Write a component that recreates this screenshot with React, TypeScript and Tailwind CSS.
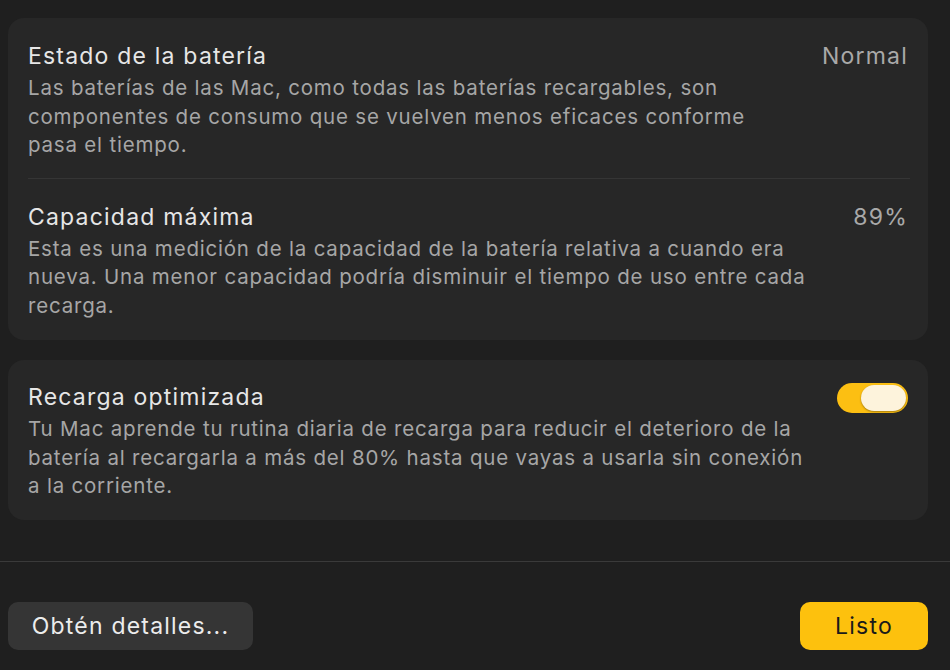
import React, { useState } from "react";

type RowProps = {
  title: string;
  description: string;
  value?: string;
  right?: React.ReactNode;
};

function Row({ title, description, value, right }: RowProps) {
  return (
    <div className="flex items-start justify-between gap-6">
      <div className="flex max-w-[785px] flex-col">
        <div className="text-[23px] leading-[28px] tracking-[1.2px] text-[#e6e6e6]">{title}</div>
        <p className="mt-[4px] text-[20.5px] leading-[28.5px] tracking-[0.8px] text-[#a6a6a6]">
          {description}
        </p>
      </div>
      {value && (
        <div className="text-[23px] leading-[28px] tracking-[1.2px] text-[#a9a9a9]">{value}</div>
      )}
      {right}
    </div>
  );
}

function Toggle({ on, onChange }: { on: boolean; onChange: (v: boolean) => void }) {
  return (
    <button
      onClick={() => onChange(!on)}
      className={
        on
          ? "flex h-[30px] w-[72px] items-center justify-end rounded-full bg-[#fcbf12] px-[2px]"
          : "flex h-[30px] w-[72px] items-center justify-start rounded-full bg-[#4a4a4a] px-[2px]"
      }
    >
      <span className="h-[26px] w-[45px] rounded-full bg-[#fdf3dc] shadow-[0_1px_2px_rgba(0,0,0,0.35)]" />
    </button>
  );
}

export default function App() {
  const [optimized, setOptimized] = useState(true);

  return (
    <div
      className="flex h-[670px] w-[950px] flex-col bg-[#1f1f1f]"
      style={{ fontFamily: "Inter, 'Noto Sans', sans-serif" }}
    >
      <div className="flex flex-col gap-5 px-2 pt-[18px] pr-[22px]">
        <section className="rounded-2xl bg-[#272727] px-5 pt-[24px] pb-[20px]">
          <Row
            title="Estado de la batería"
            value="Normal"
            description="Las baterías de las Mac, como todas las baterías recargables, son componentes de consumo que se vuelven menos eficaces conforme pasa el tiempo."
          />
          <div className="mt-[18px] mb-[24px] mr-[-2px] h-px bg-[#353535]" />
          <Row
            title="Capacidad máxima"
            value="89%"
            description="Esta es una medición de la capacidad de la batería relativa a cuando era nueva. Una menor capacidad podría disminuir el tiempo de uso entre cada recarga."
          />
        </section>

        <section className="rounded-2xl bg-[#272727] px-5 pt-[23px] pb-[19px]">
          <Row
            title="Recarga optimizada"
            description="Tu Mac aprende tu rutina diaria de recarga para reducir el deterioro de la batería al recargarla a más del 80% hasta que vayas a usarla sin conexión a la corriente."
            right={<Toggle on={optimized} onChange={setOptimized} />}
          />
        </section>
      </div>

      <div className="mt-auto border-t border-[#3a3a3a] px-2 pt-[40px] pb-[20px] pr-[22px]">
        <div className="flex items-center justify-between">
          <button className="h-[48px] w-[245px] rounded-[10px] bg-[#353535] text-[23px] tracking-[1.2px] text-[#ececec]">
            Obtén detalles...
          </button>
          <button className="h-[48px] w-[128px] rounded-[10px] bg-[#fdc10d] text-[23px] tracking-[1.2px] text-[#1a1a1a]">
            Listo
          </button>
        </div>
      </div>
    </div>
  );
}
